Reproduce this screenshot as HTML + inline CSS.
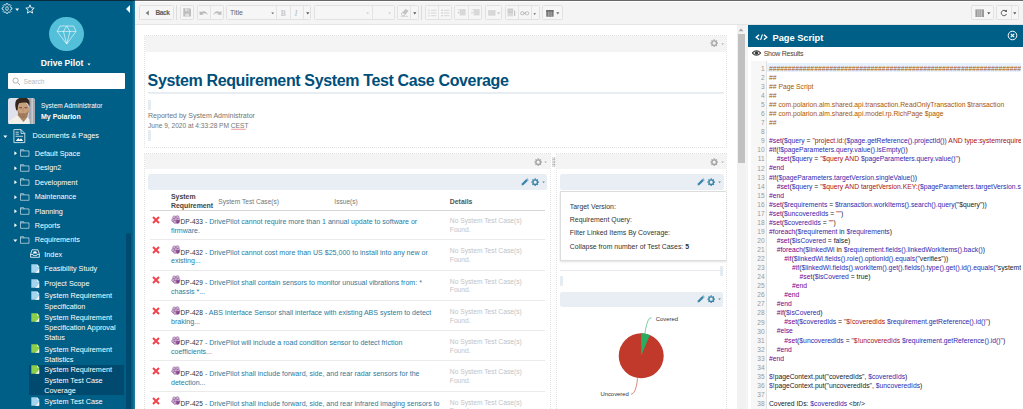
<!DOCTYPE html>
<html>
<head>
<meta charset="utf-8">
<title>System Requirement System Test Case Coverage</title>
<style>
*{box-sizing:border-box;margin:0;padding:0}
html,body{width:1023px;height:409px;overflow:hidden;background:#fff;font-family:"Liberation Sans",sans-serif;}
body{position:relative;color:#333;font-size:7px}
.abs{position:absolute}
.t{position:absolute;white-space:nowrap;line-height:1}
/* sidebar */
#side{position:absolute;left:0;top:0;width:135px;height:409px;background:#005f87;overflow:hidden}
#side .t{color:#fff}
.nav{font-size:7.25px;color:#fff;letter-spacing:0}
.sel{position:absolute;left:29px;top:365px;width:95px;height:30px;background:#004a70}
/* toolbar */
#tb{position:absolute;left:135px;top:0;width:888px;height:25px;background:#f4f4f4;border-bottom:1px solid #e4e4e4}
#topline{position:absolute;left:0;top:0;width:1023px;height:1px;background:rgba(10,10,10,0.6);z-index:50}
.btn{position:absolute;top:5px;height:14.5px;border:1px solid #e1e1e1;border-radius:1.5px;background:#f6f6f6}
.dv{position:absolute;top:0;width:1px;height:12.5px;background:#e4e4e4}
</style>
</head>
<body>
<div id="topline"></div>

<!-- ================= SIDEBAR ================= -->
<div id="side">

    <!-- top icons -->
  <svg class="abs" style="left:1px;top:3px" width="12" height="11" viewBox="0 0 12 11">
    <g fill="none" stroke="#fff" stroke-width="0.75" stroke-linejoin="round">
      <path d="M5.09 1.71 L5.30 0.55 L6.70 0.55 L6.91 1.71 L8.04 2.17 L9.00 1.50 L10.00 2.50 L9.33 3.46 L9.79 4.59 L10.95 4.80 L10.95 6.20 L9.79 6.41 L9.33 7.54 L10.00 8.50 L9.00 9.50 L8.04 8.83 L6.91 9.29 L6.70 10.45 L5.30 10.45 L5.09 9.29 L3.96 8.83 L3.00 9.50 L2.00 8.50 L2.67 7.54 L2.21 6.41 L1.05 6.20 L1.05 4.80 L2.21 4.59 L2.67 3.46 L2.00 2.50 L3.00 1.50 L3.96 2.17 Z"/>
      <ellipse cx="6" cy="5.5" rx="1.3" ry="1.9"/>
    </g>
  </svg>
  <svg class="abs" style="left:14.5px;top:7.8px" width="5" height="4" viewBox="0 0 5 4"><path d="M0.3 0.4 L4.1 0.4 L2.2 3 Z" fill="#fff"/></svg>
  <svg class="abs" style="left:24.5px;top:3.5px" width="11" height="11" viewBox="0 0 11 11">
    <path d="M5 0.9 L6.2 3.8 L9.2 4.1 L6.9 6.1 L7.6 9.1 L5 7.5 L2.4 9.1 L3.1 6.1 L0.8 4.1 L3.8 3.8 Z" fill="none" stroke="#fff" stroke-width="0.85" stroke-linejoin="round"/>
  </svg>
  <div class="abs" style="left:126px;top:5px;width:0;height:0;border-top:4px solid transparent;border-bottom:4px solid transparent;border-right:4.5px solid #fff"></div>

  <!-- project logo -->
  <div class="abs" style="left:49px;top:16.5px;width:34.5px;height:34.5px;border-radius:50%;background:#53bfd9"></div>
  <svg class="abs" style="left:56px;top:24px" width="21" height="21" viewBox="0 0 21 21">
    <g fill="none" stroke="#fff" stroke-width="0.6" stroke-linejoin="round">
      <path d="M4 2 L17.6 2 L20 7.4 L10.7 20 L1.2 7.4 Z"/>
      <path d="M1.2 7.4 L20 7.4"/>
      <path d="M7.4 7.4 L10.7 2 L14 7.4"/>
      <path d="M7.4 7.4 L10.7 20 L14 7.4"/>
    </g>
  </svg>

  <div class="t" style="left:0;width:124px;text-align:center;top:58.8px;font-size:8.6px;font-weight:bold;">Drive Pilot</div>
  <svg class="abs" style="left:87px;top:62.8px" width="5" height="4" viewBox="0 0 5 4"><path d="M0.5 0.4 L3.5 0.4 L2 2.4 Z" fill="#fff"/></svg>

  <!-- search -->
  <div class="abs" style="left:7.5px;top:73px;width:117.5px;height:16px;background:#fff;border-radius:1px"></div>
  <svg class="abs" style="left:11.5px;top:76.5px" width="9" height="9" viewBox="0 0 9 9"><circle cx="3.6" cy="3.6" r="2.6" fill="none" stroke="#a9a9a9" stroke-width="0.9"/><path d="M5.5 5.5 L8 8" stroke="#a9a9a9" stroke-width="1"/></svg>
  <div class="t" style="left:23.5px;top:78.5px;font-size:6.6px;color:#b8b8b8">Search</div>

  <!-- avatar -->
  <svg class="abs" style="left:8px;top:97.5px" width="27" height="26.5" viewBox="0 0 27 26.5">
    <defs><clipPath id="avc"><rect x="0" y="0" width="27" height="26.5" rx="2.6"/></clipPath>
    <filter id="avb" x="-10%" y="-10%" width="120%" height="120%"><feGaussianBlur stdDeviation="0.55"/></filter></defs>
    <g clip-path="url(#avc)">
      <rect width="27" height="26.5" fill="#dfe2ec"/>
      <g filter="url(#avb)">
        <rect x="20.6" y="-1" width="7.5" height="29" fill="#a4a8b0"/>
        <rect x="23.4" y="-1" width="1.6" height="29" fill="#c6c9ce"/>
        <path d="M0 27 L1.6 22.5 L6 19.5 L9.5 17 L12 20 L15.5 24 L19.5 19 L21.5 21.5 L22 27 Z" fill="#f3efe9"/>
        <path d="M9.5 17 L11 14 L20 14 L19.5 19 L15.5 24 L12 20 Z" fill="#a98466"/>
        <ellipse cx="15.2" cy="11.6" rx="5.7" ry="7.6" fill="#c9a07c"/>
        <path d="M9.4 11 Q9.6 18.6 15 20 Q20.4 18.6 21 11 Q19.6 15 17.6 15.6 Q15.2 14.6 12.8 15.6 Q10.6 15 9.4 11 Z" fill="#83614a" opacity="0.6"/>
        <path d="M8.2 12.5 Q6.4 6 8 2.6 Q10.4 -0.6 15 -0.4 Q20 -0.6 21.4 3 Q22 6 21.2 8.5 Q20.6 5.4 18.6 4.8 Q14 4.2 11 5.6 Q9.6 8 9.6 12 Z" fill="#34251c"/>
        <rect x="11.3" y="9.3" width="2.7" height="0.9" fill="#4a3327" opacity="0.9"/>
        <rect x="16.6" y="9.3" width="2.7" height="0.9" fill="#4a3327" opacity="0.9"/>
        <rect x="14.7" y="10" width="1" height="3.6" fill="#b58b69" opacity="0.8"/>
      </g>
    </g>
  </svg>
  <div class="t" style="left:41px;top:103.2px;font-size:6.5px">System Administrator</div>
  <div class="t" style="left:41px;top:113px;font-size:7px;font-weight:bold">My Polarion</div>

  <svg class="abs" style="left:3.4px;top:135.1px" width="5" height="4" viewBox="0 0 5 4"><path d="M0.3 0.4 L4.3 0.4 L2.3 3 Z" fill="#fff"/></svg>
  <svg class="abs" style="left:13px;top:129px" width="13" height="14.5" viewBox="0 0 13 14.5"><g fill="none" stroke="#fff" stroke-width="0.75" stroke-linejoin="round"><path d="M0.9 0.6 L8 0.6 L11.8 4.4 L11.8 13.6 L0.9 13.6 Z"/><path d="M8 0.6 L8 4.4 L11.8 4.4"/><path d="M2.6 3.2 L5.8 3.2 M2.6 5.2 L5.8 5.2 M2.6 7.3 L10 7.3"/></g><path d="M2.8 12 L5.2 9 L6.6 10.8 L8 9.2 L10.2 12 Z" fill="#fff"/></svg>
  <div class="t nav" style="left:32.5px;top:132.3px;font-size:7.3px">Documents &amp; Pages</div>
  <svg class="abs" style="left:13.6px;top:151.0px" width="4" height="5" viewBox="0 0 4 5"><path d="M0.4 0.3 L3 2.3 L0.4 4.3 Z" fill="#fff"/></svg>
  <svg class="abs" style="left:20.4px;top:149.2px" width="9.6" height="8" viewBox="0 0 9.6 8"><path d="M0.5 1.9 L0.5 0.7 L3.6 0.7 L4.2 1.9 L9 1.9 L9 7.3 L0.5 7.3 Z M0.5 1.9 L4.2 1.9" fill="none" stroke="#fff" stroke-opacity="0.88" stroke-width="0.65" stroke-linejoin="round"/></svg>
  <div class="t nav" style="left:34.7px;top:149.6px">Default Space</div>
  <svg class="abs" style="left:13.6px;top:165.7px" width="4" height="5" viewBox="0 0 4 5"><path d="M0.4 0.3 L3 2.3 L0.4 4.3 Z" fill="#fff"/></svg>
  <svg class="abs" style="left:20.4px;top:163.9px" width="9.6" height="8" viewBox="0 0 9.6 8"><path d="M0.5 1.9 L0.5 0.7 L3.6 0.7 L4.2 1.9 L9 1.9 L9 7.3 L0.5 7.3 Z M0.5 1.9 L4.2 1.9" fill="none" stroke="#fff" stroke-opacity="0.88" stroke-width="0.65" stroke-linejoin="round"/></svg>
  <div class="t nav" style="left:34.7px;top:164.3px">Design2</div>
  <svg class="abs" style="left:13.6px;top:180.0px" width="4" height="5" viewBox="0 0 4 5"><path d="M0.4 0.3 L3 2.3 L0.4 4.3 Z" fill="#fff"/></svg>
  <svg class="abs" style="left:20.4px;top:178.2px" width="9.6" height="8" viewBox="0 0 9.6 8"><path d="M0.5 1.9 L0.5 0.7 L3.6 0.7 L4.2 1.9 L9 1.9 L9 7.3 L0.5 7.3 Z M0.5 1.9 L4.2 1.9" fill="none" stroke="#fff" stroke-opacity="0.88" stroke-width="0.65" stroke-linejoin="round"/></svg>
  <div class="t nav" style="left:34.7px;top:178.6px">Development</div>
  <svg class="abs" style="left:13.6px;top:194.5px" width="4" height="5" viewBox="0 0 4 5"><path d="M0.4 0.3 L3 2.3 L0.4 4.3 Z" fill="#fff"/></svg>
  <svg class="abs" style="left:20.4px;top:192.7px" width="9.6" height="8" viewBox="0 0 9.6 8"><path d="M0.5 1.9 L0.5 0.7 L3.6 0.7 L4.2 1.9 L9 1.9 L9 7.3 L0.5 7.3 Z M0.5 1.9 L4.2 1.9" fill="none" stroke="#fff" stroke-opacity="0.88" stroke-width="0.65" stroke-linejoin="round"/></svg>
  <div class="t nav" style="left:34.7px;top:193.1px">Maintenance</div>
  <svg class="abs" style="left:13.6px;top:208.9px" width="4" height="5" viewBox="0 0 4 5"><path d="M0.4 0.3 L3 2.3 L0.4 4.3 Z" fill="#fff"/></svg>
  <svg class="abs" style="left:20.4px;top:207.1px" width="9.6" height="8" viewBox="0 0 9.6 8"><path d="M0.5 1.9 L0.5 0.7 L3.6 0.7 L4.2 1.9 L9 1.9 L9 7.3 L0.5 7.3 Z M0.5 1.9 L4.2 1.9" fill="none" stroke="#fff" stroke-opacity="0.88" stroke-width="0.65" stroke-linejoin="round"/></svg>
  <div class="t nav" style="left:34.7px;top:207.5px">Planning</div>
  <svg class="abs" style="left:13.6px;top:223.2px" width="4" height="5" viewBox="0 0 4 5"><path d="M0.4 0.3 L3 2.3 L0.4 4.3 Z" fill="#fff"/></svg>
  <svg class="abs" style="left:20.4px;top:221.4px" width="9.6" height="8" viewBox="0 0 9.6 8"><path d="M0.5 1.9 L0.5 0.7 L3.6 0.7 L4.2 1.9 L9 1.9 L9 7.3 L0.5 7.3 Z M0.5 1.9 L4.2 1.9" fill="none" stroke="#fff" stroke-opacity="0.88" stroke-width="0.65" stroke-linejoin="round"/></svg>
  <div class="t nav" style="left:34.7px;top:221.8px">Reports</div>
  <svg class="abs" style="left:13.0px;top:238.5px" width="5" height="4" viewBox="0 0 5 4"><path d="M0.3 0.4 L4.3 0.4 L2.3 3 Z" fill="#fff"/></svg>
  <svg class="abs" style="left:20.4px;top:235.9px" width="9.6" height="8" viewBox="0 0 9.6 8"><path d="M0.5 1.9 L0.5 0.7 L3.6 0.7 L4.2 1.9 L9 1.9 L9 7.3 L0.5 7.3 Z M0.5 1.9 L4.2 1.9" fill="none" stroke="#fff" stroke-opacity="0.88" stroke-width="0.65" stroke-linejoin="round"/></svg>
  <div class="t nav" style="left:34.7px;top:236.3px">Requirements</div>
  <div class="sel"></div>
  <svg class="abs" style="left:30px;top:248.8px" width="10" height="9" viewBox="0 0 10 9"><g fill="none" stroke="#fff" stroke-width="0.8" stroke-linejoin="round"><path d="M0.6 5.2 L2 0.8 L8 0.8 L9.4 5.2 L9.4 8.3 L0.6 8.3 Z"/><path d="M0.6 5.4 L3 5.4 L3.4 6.6 L6.6 6.6 L7 5.4 L9.4 5.4"/></g><path d="M3 4.6 Q3 2.3 5 2.3 Q7 2.3 7 4.6 Z" fill="#fff"/></svg>
  <div class="t nav" style="left:44.3px;top:250.5px">Index</div>
  <svg class="abs" style="left:31px;top:263.7px" width="8.5" height="9" viewBox="0 0 8.5 9"><path d="M0.3 0.3 L6 0.3 L8.2 2.5 L8.2 8.7 L0.3 8.7 Z" fill="#a5d5ee"/><path d="M8.2 4.2 L8.2 8.7 L4 8.7 Q7 7.5 8.2 4.2 Z" fill="#fff" opacity="0.95"/><path d="M6 0.3 L6 2.5 L8.2 2.5 Z" fill="#fff" opacity="0.75"/></svg>
  <div class="t nav" style="left:44.3px;top:264.8px">Feasibility Study</div>
  <svg class="abs" style="left:31px;top:278.5px" width="8.5" height="9" viewBox="0 0 8.5 9"><path d="M0.3 0.3 L6 0.3 L8.2 2.5 L8.2 8.7 L0.3 8.7 Z" fill="#a5d5ee"/><path d="M8.2 4.2 L8.2 8.7 L4 8.7 Q7 7.5 8.2 4.2 Z" fill="#fff" opacity="0.95"/><path d="M6 0.3 L6 2.5 L8.2 2.5 Z" fill="#fff" opacity="0.75"/></svg>
  <div class="t nav" style="left:44.3px;top:279.6px">Project Scope</div>
  <svg class="abs" style="left:31px;top:291.2px" width="8.5" height="9" viewBox="0 0 8.5 9"><path d="M0.3 0.3 L6 0.3 L8.2 2.5 L8.2 8.7 L0.3 8.7 Z" fill="#a5d5ee"/><path d="M8.2 4.2 L8.2 8.7 L4 8.7 Q7 7.5 8.2 4.2 Z" fill="#fff" opacity="0.95"/><path d="M6 0.3 L6 2.5 L8.2 2.5 Z" fill="#fff" opacity="0.75"/></svg>
  <div class="t nav" style="left:44.3px;top:292.3px">System Requirement</div>
  <div class="t nav" style="left:44.3px;top:302.6px">Specification</div>
  <svg class="abs" style="left:31px;top:312.7px" width="8.5" height="9" viewBox="0 0 8.5 9"><path d="M0.3 0.3 L6 0.3 L8.2 2.5 L8.2 8.7 L0.3 8.7 Z" fill="#8ccf4d"/><path d="M8.2 4.2 L8.2 8.7 L4 8.7 Q7 7.5 8.2 4.2 Z" fill="#fff" opacity="0.95"/><path d="M6 0.3 L6 2.5 L8.2 2.5 Z" fill="#fff" opacity="0.75"/></svg>
  <div class="t nav" style="left:44.3px;top:313.8px">System Requirement</div>
  <div class="t nav" style="left:44.3px;top:324.0px">Specification Approval</div>
  <div class="t nav" style="left:44.3px;top:334.0px">Status</div>
  <svg class="abs" style="left:31px;top:344.4px" width="8.5" height="9" viewBox="0 0 8.5 9"><path d="M0.3 0.3 L6 0.3 L8.2 2.5 L8.2 8.7 L0.3 8.7 Z" fill="#8ccf4d"/><path d="M8.2 4.2 L8.2 8.7 L4 8.7 Q7 7.5 8.2 4.2 Z" fill="#fff" opacity="0.95"/><path d="M6 0.3 L6 2.5 L8.2 2.5 Z" fill="#fff" opacity="0.75"/></svg>
  <div class="t nav" style="left:44.3px;top:345.5px">System Requirement</div>
  <div class="t nav" style="left:44.3px;top:355.6px">Statistics</div>
  <svg class="abs" style="left:31px;top:365.2px" width="8.5" height="9" viewBox="0 0 8.5 9"><path d="M0.3 0.3 L6 0.3 L8.2 2.5 L8.2 8.7 L0.3 8.7 Z" fill="#8ccf4d"/><path d="M8.2 4.2 L8.2 8.7 L4 8.7 Q7 7.5 8.2 4.2 Z" fill="#fff" opacity="0.95"/><path d="M6 0.3 L6 2.5 L8.2 2.5 Z" fill="#fff" opacity="0.75"/></svg>
  <div class="t nav" style="left:44.3px;top:366.3px">System Requirement</div>
  <div class="t nav" style="left:44.3px;top:376.6px">System Test Case</div>
  <div class="t nav" style="left:44.3px;top:386.9px">Coverage</div>
  <svg class="abs" style="left:31px;top:397.0px" width="8.5" height="9" viewBox="0 0 8.5 9"><path d="M0.3 0.3 L6 0.3 L8.2 2.5 L8.2 8.7 L0.3 8.7 Z" fill="#a5d5ee"/><path d="M8.2 4.2 L8.2 8.7 L4 8.7 Q7 7.5 8.2 4.2 Z" fill="#fff" opacity="0.95"/><path d="M6 0.3 L6 2.5 L8.2 2.5 Z" fill="#fff" opacity="0.75"/></svg>
  <div class="t nav" style="left:44.3px;top:398.1px">System Test Case</div>
  <div class="abs" style="left:126.4px;top:233px;width:4.4px;height:200px;background:#004a70;border-radius:2.2px"></div>
  <div class="abs" style="left:132.4px;top:0;width:2.6px;height:409px;background:linear-gradient(90deg,rgba(255,255,255,0),rgba(120,200,230,0.3))"></div>

</div>

<!-- ================= TOOLBAR ================= -->
<div id="tb"><div class="abs" style="left:0;top:1px;width:888px;height:1px;background:#fdfdfd"></div>
  <!--TB-START-->
  <!-- coordinates relative to #tb (left:135) -->
  <div class="btn" style="left:4px;width:35px"></div>
  <svg class="abs" style="left:9.5px;top:9.6px" width="5" height="7" viewBox="0 0 5 7"><path d="M3.8 0.6 L3.8 5.6 L0.7 3.1 Z" fill="#7a7a7a"/></svg>
  <div class="t" style="left:20.5px;top:10px;font-size:6.6px;font-weight:bold;color:#5a5a5a;letter-spacing:-0.45px">Back</div>
  <div class="abs" style="left:41px;top:5px;width:1px;height:14.5px;background:#dcdcdc"></div>
  <!-- save -->
  <div class="btn" style="left:45.3px;width:13.5px"></div>
  <svg class="abs" style="left:48px;top:8px" width="8.4" height="8.8" viewBox="0 0 8.4 8.8"><path d="M0.3 0.3 L7 0.3 L8.1 1.4 L8.1 8.5 L0.3 8.5 Z" fill="#bcbcbc"/><rect x="2" y="0.3" width="4.2" height="2.9" fill="#dedede"/><rect x="4.6" y="0.7" width="1" height="1.9" fill="#bcbcbc"/><rect x="2.3" y="5.6" width="3.8" height="2.9" fill="#e0e0e0"/></svg>
  <!-- undo/redo -->
  <div class="btn" style="left:61.6px;width:27px"><div class="dv" style="left:12.4px"></div></div>
  <svg class="abs" style="left:63.6px;top:10px" width="10" height="6" viewBox="0 0 10 6"><path d="M0.6 0.9 L0.6 5.1 L4.8 4.6 L3.5 3.5 Q6 2.6 9 4.7 Q6.4 -0.6 2 2.1 Z" fill="#b9b9b9"/></svg>
  <svg class="abs" style="left:77.4px;top:10px" width="10" height="6" viewBox="0 0 10 6"><path d="M9.4 0.9 L9.4 5.1 L5.2 4.6 L6.5 3.5 Q4 2.6 1 4.7 Q3.6 -0.6 8 2.1 Z" fill="#bdbdbd"/></svg>
  <!-- style select + B I -->
  <div class="btn" style="left:91px;width:85px"><div class="dv" style="left:49.4px"></div><div class="dv" style="left:63px"></div><div class="dv" style="left:76px"></div></div>
  <div class="t" style="left:95px;top:9px;font-size:7px;color:#686868">Title</div>
  <svg class="abs" style="left:135.5px;top:12.3px" width="4" height="3" viewBox="0 0 4 3"><path d="M0.3 0.4 L3.1 0.4 L1.7 2.2 Z" fill="#666"/></svg>
  <div class="t" style="left:145.8px;top:9.8px;font-size:7.6px;font-weight:bold;color:#c6c6c6;font-family:'Liberation Serif',serif">B</div>
  <div class="t" style="left:159.4px;top:9.2px;font-size:9px;font-style:italic;color:#bdbdbd;font-family:'Liberation Serif',serif">I</div>
  <svg class="abs" style="left:170.5px;top:12px" width="4" height="3" viewBox="0 0 4 3"><path d="M0.2 0.3 L3.4 0.3 L1.8 2.5 Z" fill="#555"/></svg>
  <!-- font family / size -->
  <div class="btn" style="left:179.3px;width:80.3px"><div class="dv" style="left:57px"></div></div>
  <svg class="abs" style="left:230.5px;top:12.3px" width="4" height="3" viewBox="0 0 4 3"><path d="M0.3 0.4 L3.1 0.4 L1.7 2.2 Z" fill="#ccc"/></svg>
  <svg class="abs" style="left:253.3px;top:12.3px" width="4" height="3" viewBox="0 0 4 3"><path d="M0.3 0.4 L3.1 0.4 L1.7 2.2 Z" fill="#ccc"/></svg>
  <!-- eraser -->
  <div class="btn" style="left:262.4px;width:21.2px"><div class="dv" style="left:11.4px"></div></div>
  <svg class="abs" style="left:264.5px;top:8px" width="10" height="9" viewBox="0 0 10 9"><path d="M5.6 0.8 L8.6 3 L5.4 6.6 L2.4 4.4 Z" fill="#c4c4c4"/><path d="M2.4 4.4 L5.4 6.6 L4.3 7.6 L2.2 7.6 L1.2 6 Z" fill="none" stroke="#bbb" stroke-width="0.7"/><path d="M0.8 8.4 L8 8.4" stroke="#c8c8c8" stroke-width="0.7"/></svg>
  <svg class="abs" style="left:277.5px;top:12px" width="4" height="3" viewBox="0 0 4 3"><path d="M0.2 0.3 L3.4 0.3 L1.8 2.5 Z" fill="#555"/></svg>
  <div class="abs" style="left:286.3px;top:5px;width:1px;height:14.5px;background:#dcdcdc"></div>
  <!-- lists -->
  <div class="btn" style="left:290px;width:26.8px"><div class="dv" style="left:11.8px"></div></div>
  <svg class="abs" style="left:292.5px;top:8.5px" width="9" height="8" viewBox="0 0 9 8"><g stroke="#cfcfcf" stroke-width="0.8"><path d="M3 1.3 L8.4 1.3 M3 4 L8.4 4 M3 6.7 L8.4 6.7"/><path d="M1 0.4 L1 2.2 M1 3.1 L1 4.9 M1 5.8 L1 7.6" stroke-width="0.9"/></g></svg>
  <svg class="abs" style="left:305.8px;top:8.5px" width="9" height="8" viewBox="0 0 9 8"><g stroke="#cfcfcf" stroke-width="0.8"><path d="M3 1.3 L8.4 1.3 M3 4 L8.4 4 M3 6.7 L8.4 6.7"/></g><g fill="#c8c8c8"><rect x="0.4" y="0.6" width="1.4" height="1.4"/><rect x="0.4" y="3.3" width="1.4" height="1.4"/><rect x="0.4" y="6" width="1.4" height="1.4"/></g></svg>
  <!-- indent -->
  <div class="btn" style="left:319.4px;width:27.4px"><div class="dv" style="left:12.8px"></div></div>
  <svg class="abs" style="left:322px;top:9.4px" width="9" height="7" viewBox="0 0 9 7"><rect x="2.6" y="0.4" width="6" height="6" fill="#d8d8d8"/><path d="M0.6 0.6 L8.6 0.6" stroke="#d2d2d2" stroke-width="0.6"/><path d="M2 2.6 L0.6 3.7 L2 4.8 Z" fill="#c4c4c4"/></svg>
  <svg class="abs" style="left:335.6px;top:9.4px" width="9" height="7" viewBox="0 0 9 7"><rect x="2.6" y="0.4" width="6" height="6" fill="#d8d8d8"/><path d="M0.6 0.6 L8.6 0.6" stroke="#d2d2d2" stroke-width="0.6"/><path d="M0.6 2.6 L2 3.7 L0.6 4.8 Z" fill="#c4c4c4"/></svg>
  <!-- table -->
  <div class="btn" style="left:349.6px;width:17.3px"></div>
  <svg class="abs" style="left:352.7px;top:9.8px" width="8" height="6" viewBox="0 0 8 6"><rect x="0.2" y="0.2" width="7.2" height="5.4" fill="#d2d2d2"/><path d="M0.2 2 L7.4 2 M0.2 3.8 L7.4 3.8 M2.6 0.2 L2.6 5.6 M5 0.2 L5 5.6" stroke="#e4e4e4" stroke-width="0.4"/></svg>
  <svg class="abs" style="left:361.5px;top:12px" width="4" height="3" viewBox="0 0 4 3"><path d="M0.3 0.4 L3.1 0.4 L1.7 2.2 Z" fill="#bbb"/></svg>
  <!-- image/link -->
  <div class="btn" style="left:369.8px;width:34.8px"><div class="dv" style="left:12px"></div><div class="dv" style="left:25px"></div></div>
  <svg class="abs" style="left:372.3px;top:7.6px" width="10" height="9" viewBox="0 0 10 9"><rect x="0.5" y="0.6" width="5.6" height="5" fill="#c9c9c9"/><path d="M1.2 2 L2.6 3.4 L3.8 2.2 L5.4 4" fill="none" stroke="#efefef" stroke-width="0.6"/><path d="M0.5 6.6 L6 6.6 M0.5 7.8 L6 7.8" stroke="#c4c4c4" stroke-width="0.7"/><path d="M7.6 2.4 L7.6 8" stroke="#bdbdbd" stroke-width="1.1"/></svg>
  <svg class="abs" style="left:384.8px;top:11px" width="10" height="5" viewBox="0 0 10 5"><rect x="0.6" y="0.8" width="3.6" height="3" rx="1.4" fill="none" stroke="#b5b5b5" stroke-width="0.9"/><rect x="5.2" y="0.8" width="3.6" height="3" rx="1.4" fill="none" stroke="#b5b5b5" stroke-width="0.9"/><path d="M3.4 2.3 L6 2.3" stroke="#b5b5b5" stroke-width="0.8"/></svg>
  <svg class="abs" style="left:398.4px;top:12.6px" width="4" height="3" viewBox="0 0 4 3"><path d="M0.4 0.3 L3 0.3 L1.7 2 Z" fill="#666"/></svg>
  <!-- columns -->
  <div class="btn" style="left:407.4px;width:20.2px"></div>
  <svg class="abs" style="left:410.8px;top:10px" width="8" height="7" viewBox="0 0 8 7"><rect x="0.2" y="0.2" width="7.4" height="6.5" fill="#7a7a7a"/><path d="M0.2 0.9 L7.6 0.9" stroke="#5e5e5e" stroke-width="1.2"/><path d="M2.6 1.6 L2.6 6.7 M5.2 1.6 L5.2 6.7" stroke="#b8b8b8" stroke-width="0.7"/><rect x="3" y="1.6" width="1.9" height="5.1" fill="#8e8e8e"/></svg>
  <svg class="abs" style="left:420.8px;top:11.8px" width="4" height="3" viewBox="0 0 4 3"><path d="M0.2 0.3 L3.4 0.3 L1.8 2.4 Z" fill="#6e6e6e"/></svg>
  <!-- right buttons -->
  <div class="btn" style="left:836.3px;width:22.3px"></div>
  <svg class="abs" style="left:839.6px;top:8.7px" width="10" height="9" viewBox="0 0 10 9"><rect x="0.4" y="0.4" width="8.6" height="7.6" fill="#9a9a9a"/><path d="M2.8 0.6 L2.8 8 M6.4 0.6 L6.4 8" stroke="#cfcfcf" stroke-width="0.8"/><rect x="3.6" y="0.8" width="2" height="6.8" fill="#b4b4b4"/></svg>
  <svg class="abs" style="left:852.3px;top:11.8px" width="4" height="3" viewBox="0 0 4 3"><path d="M0.2 0.3 L3.4 0.3 L1.8 2.5 Z" fill="#555"/></svg>
  <div class="btn" style="left:861.2px;width:22.8px"><div class="dv" style="left:13.6px"></div></div>
  <svg class="abs" style="left:865.3px;top:9.3px" width="8" height="8" viewBox="0 0 8 8"><path d="M6 2.2 A2.7 2.7 0 1 0 6.5 5" fill="none" stroke="#555" stroke-width="1"/><path d="M4.4 2.8 L7 3 L6.8 0.4 Z" fill="#555"/></svg>
  <svg class="abs" style="left:877.7px;top:11.8px" width="4" height="3" viewBox="0 0 4 3"><path d="M0.2 0.3 L3.4 0.3 L1.8 2.5 Z" fill="#555"/></svg>
  <!--TB-END-->
</div>

<!-- ================= MAIN ================= -->
<div id="main" class="abs" style="left:135px;top:25px;width:613px;height:384px;background:#fff;overflow:hidden">
  <div class="abs" style="left:9.0px;top:10.0px;width:583.0px;height:113.0px;border:1px dotted #e3e3e3"></div>
  <div class="abs" style="left:10.0px;top:11.0px;width:581.0px;height:15.6px;background:#f4f4f4"></div>
  <svg class="abs" style="left:574.8px;top:14.2px" width="8.4" height="8.4" viewBox="0 0 9 9"><circle cx="4.5" cy="4.5" r="2.45" fill="none" stroke="#aaaaaa" stroke-width="1.5"/><g stroke="#aaaaaa" stroke-width="1.3"><path d="M4.5 0.4 L4.5 1.8 M4.5 7.2 L4.5 8.6 M0.4 4.5 L1.8 4.5 M7.2 4.5 L8.6 4.5 M1.6 1.6 L2.6 2.6 M6.4 6.4 L7.4 7.4 M1.6 7.4 L2.6 6.4 M6.4 2.6 L7.4 1.6"/></g></svg>
  <svg class="abs" style="left:585.6px;top:18.0px" width="4" height="3" viewBox="0 0 4 3"><path d="M0.3 0.4 L2.9 0.4 L1.6 2.1 Z" fill="#aaa"/></svg>
  <div class="t" style="left:12.6px;top:47.8px;font-size:16px;font-weight:bold;color:#004f7a;letter-spacing:-0.36px">System Requirement System Test Case Coverage</div>
  <div class="abs" style="left:13.0px;top:67.0px;width:576.0px;height:1.6px;background:#e8edf2"></div>
  <div class="abs" style="left:13.0px;top:74.6px;width:3px;height:10px;background:#e4ebf1;border-radius:1px"></div>
  <div class="t" style="left:13.0px;top:87.2px;font-size:7.05px;color:#757575">Reported by System Administrator</div>
  <div class="t" style="left:13.0px;top:97.7px;font-size:6.6px;color:#757575">June 9, 2020 at 4:33:28 PM <span style="position:relative">CEST<svg style="position:absolute;left:0;top:6.4px" width="16" height="3" viewBox="0 0 16 3"><path d="M0 1.8 L1 0.8 L2 1.8 L3 0.8 L4 1.8 L5 0.8 L6 1.8 L7 0.8 L8 1.8 L9 0.8 L10 1.8 L11 0.8 L12 1.8 L13 0.8 L14 1.8 L15 0.8" fill="none" stroke="#e0433c" stroke-width="0.55"/></svg></span></div>
  <div class="abs" style="left:13.0px;top:105.0px;width:3px;height:11px;background:#e4ebf1;border-radius:1px"></div>
  <div class="abs" style="left:9.0px;top:128.0px;width:407.0px;height:300px;border:1px dotted #e3e3e3"></div>
  <div class="abs" style="left:10.0px;top:129.0px;width:405.0px;height:15.3px;background:#f4f4f4"></div>
  <svg class="abs" style="left:398.5px;top:132.8px" width="8.4" height="8.4" viewBox="0 0 9 9"><circle cx="4.5" cy="4.5" r="2.45" fill="none" stroke="#a4a4a4" stroke-width="1.5"/><g stroke="#a4a4a4" stroke-width="1.3"><path d="M4.5 0.4 L4.5 1.8 M4.5 7.2 L4.5 8.6 M0.4 4.5 L1.8 4.5 M7.2 4.5 L8.6 4.5 M1.6 1.6 L2.6 2.6 M6.4 6.4 L7.4 7.4 M1.6 7.4 L2.6 6.4 M6.4 2.6 L7.4 1.6"/></g></svg>
  <svg class="abs" style="left:409.4px;top:136.3px" width="4" height="3" viewBox="0 0 4 3"><path d="M0.3 0.4 L2.9 0.4 L1.6 2.1 Z" fill="#aaa"/></svg>
  <div class="abs" style="left:13.0px;top:149.0px;width:399.0px;height:16.2px;background:#e8eef3;border-radius:2.5px"></div>
  <svg class="abs" style="left:386.0px;top:153.2px" width="8" height="8" viewBox="0 0 8 8"><path d="M0.5 7.5 L0.9 5.5 L5.3 1.1 L6.9 2.7 L2.5 7.1 Z" fill="#3a85a9"/><path d="M5.9 0.5 L7.5 2.1" stroke="#3a85a9" stroke-width="0.9"/></svg>
  <svg class="abs" style="left:396.2px;top:152.8px" width="8.4" height="8.4" viewBox="0 0 9 9"><circle cx="4.5" cy="4.5" r="2.45" fill="none" stroke="#3a85a9" stroke-width="1.5"/><g stroke="#3a85a9" stroke-width="1.3"><path d="M4.5 0.4 L4.5 1.8 M4.5 7.2 L4.5 8.6 M0.4 4.5 L1.8 4.5 M7.2 4.5 L8.6 4.5 M1.6 1.6 L2.6 2.6 M6.4 6.4 L7.4 7.4 M1.6 7.4 L2.6 6.4 M6.4 2.6 L7.4 1.6"/></g></svg>
  <svg class="abs" style="left:407.2px;top:155.9px" width="4" height="3" viewBox="0 0 4 3"><path d="M0.3 0.4 L2.9 0.4 L1.6 2.1 Z" fill="#3a85a9"/></svg>
  <div class="t" style="left:36.0px;top:168.8px;font-size:6.9px;font-weight:bold;color:#444">System</div>
  <div class="t" style="left:36.0px;top:177.8px;font-size:6.9px;font-weight:bold;color:#444">Requirement</div>
  <div class="t" style="left:83.3px;top:173.7px;font-size:6.6px;color:#757575">System Test Case(s)</div>
  <div class="t" style="left:199.3px;top:173.7px;font-size:6.6px;color:#757575">Issue(s)</div>
  <div class="t" style="left:314.8px;top:174.2px;font-size:6.9px;font-weight:bold;color:#555">Details</div>
  <div class="abs" style="left:15.0px;top:185.4px;width:395.0px;height:1px;background:#d6d6d6"></div>
  <svg class="abs" style="left:17.4px;top:190.7px" width="8" height="8" viewBox="0 0 8 8"><path d="M1 1 L7 7 M7 1 L1 7" stroke="#f0434e" stroke-width="2"/></svg>
  <svg class="abs" style="left:35.8px;top:189.8px" width="10" height="9" viewBox="0 0 10 9"><g fill="#d3b3d8" stroke="#86588f" stroke-width="0.55"><circle cx="3.4" cy="2.6" r="1.7"/><circle cx="6.4" cy="2.4" r="1.7"/><circle cx="2.4" cy="5.2" r="1.7"/><circle cx="5" cy="4.6" r="1.8"/><circle cx="7.4" cy="5" r="1.6"/><circle cx="4" cy="6.8" r="1.6"/><circle cx="6.4" cy="6.9" r="1.5"/></g><path d="M5.2 5.6 L8.6 5 L8.4 8 L5.6 8.6 Z" fill="#7b2f82" opacity="0.8"/></svg>
  <div class="t" style="left:45.6px;top:193.3px;font-size:7.05px;color:#2b7ba0"><span style="color:#333;font-size:6.5px;letter-spacing:0.05px">DP-433</span> - DrivePilot cannot require more than 1 annual update to software or</div>
  <div class="t" style="left:36.0px;top:202.2px;font-size:7.05px;color:#2b7ba0">firmware.</div>
  <div class="t" style="left:314.8px;top:193.0px;font-size:6.7px;color:#c3c3c3">No System Test Case(s)</div>
  <div class="t" style="left:314.8px;top:201.9px;font-size:6.7px;color:#c3c3c3">Found.</div>
  <div class="abs" style="left:15.0px;top:214.3px;width:395.0px;height:1px;background:#eaeaea"></div>
  <svg class="abs" style="left:17.4px;top:220.9px" width="8" height="8" viewBox="0 0 8 8"><path d="M1 1 L7 7 M7 1 L1 7" stroke="#f0434e" stroke-width="2"/></svg>
  <svg class="abs" style="left:35.8px;top:220.0px" width="10" height="9" viewBox="0 0 10 9"><g fill="#d3b3d8" stroke="#86588f" stroke-width="0.55"><circle cx="3.4" cy="2.6" r="1.7"/><circle cx="6.4" cy="2.4" r="1.7"/><circle cx="2.4" cy="5.2" r="1.7"/><circle cx="5" cy="4.6" r="1.8"/><circle cx="7.4" cy="5" r="1.6"/><circle cx="4" cy="6.8" r="1.6"/><circle cx="6.4" cy="6.9" r="1.5"/></g><path d="M5.2 5.6 L8.6 5 L8.4 8 L5.6 8.6 Z" fill="#7b2f82" opacity="0.8"/></svg>
  <div class="t" style="left:45.6px;top:223.5px;font-size:7.05px;color:#2b7ba0"><span style="color:#333;font-size:6.5px;letter-spacing:0.05px">DP-432</span> - DrivePilot cannot cost more than US $25,000 to install into any new or</div>
  <div class="t" style="left:36.0px;top:232.4px;font-size:7.05px;color:#2b7ba0">existing...</div>
  <div class="t" style="left:314.8px;top:223.2px;font-size:6.7px;color:#c3c3c3">No System Test Case(s)</div>
  <div class="t" style="left:314.8px;top:232.1px;font-size:6.7px;color:#c3c3c3">Found.</div>
  <div class="abs" style="left:15.0px;top:244.6px;width:395.0px;height:1px;background:#eaeaea"></div>
  <svg class="abs" style="left:17.4px;top:251.2px" width="8" height="8" viewBox="0 0 8 8"><path d="M1 1 L7 7 M7 1 L1 7" stroke="#f0434e" stroke-width="2"/></svg>
  <svg class="abs" style="left:35.8px;top:250.3px" width="10" height="9" viewBox="0 0 10 9"><g fill="#d3b3d8" stroke="#86588f" stroke-width="0.55"><circle cx="3.4" cy="2.6" r="1.7"/><circle cx="6.4" cy="2.4" r="1.7"/><circle cx="2.4" cy="5.2" r="1.7"/><circle cx="5" cy="4.6" r="1.8"/><circle cx="7.4" cy="5" r="1.6"/><circle cx="4" cy="6.8" r="1.6"/><circle cx="6.4" cy="6.9" r="1.5"/></g><path d="M5.2 5.6 L8.6 5 L8.4 8 L5.6 8.6 Z" fill="#7b2f82" opacity="0.8"/></svg>
  <div class="t" style="left:45.6px;top:253.8px;font-size:7.05px;color:#2b7ba0"><span style="color:#333;font-size:6.5px;letter-spacing:0.05px">DP-429</span> - DrivePilot shall contain sensors to monitor unusual vibrations from: *</div>
  <div class="t" style="left:36.0px;top:262.7px;font-size:7.05px;color:#2b7ba0">chassis *...</div>
  <div class="t" style="left:314.8px;top:253.5px;font-size:6.7px;color:#c3c3c3">No System Test Case(s)</div>
  <div class="t" style="left:314.8px;top:262.4px;font-size:6.7px;color:#c3c3c3">Found.</div>
  <div class="abs" style="left:15.0px;top:274.8px;width:395.0px;height:1px;background:#eaeaea"></div>
  <svg class="abs" style="left:17.4px;top:281.5px" width="8" height="8" viewBox="0 0 8 8"><path d="M1 1 L7 7 M7 1 L1 7" stroke="#f0434e" stroke-width="2"/></svg>
  <svg class="abs" style="left:35.8px;top:280.6px" width="10" height="9" viewBox="0 0 10 9"><g fill="#d3b3d8" stroke="#86588f" stroke-width="0.55"><circle cx="3.4" cy="2.6" r="1.7"/><circle cx="6.4" cy="2.4" r="1.7"/><circle cx="2.4" cy="5.2" r="1.7"/><circle cx="5" cy="4.6" r="1.8"/><circle cx="7.4" cy="5" r="1.6"/><circle cx="4" cy="6.8" r="1.6"/><circle cx="6.4" cy="6.9" r="1.5"/></g><path d="M5.2 5.6 L8.6 5 L8.4 8 L5.6 8.6 Z" fill="#7b2f82" opacity="0.8"/></svg>
  <div class="t" style="left:45.6px;top:284.1px;font-size:7.05px;color:#2b7ba0"><span style="color:#333;font-size:6.5px;letter-spacing:0.05px">DP-428</span> - ABS Interface Sensor shall interface with existing ABS system to detect</div>
  <div class="t" style="left:36.0px;top:293.0px;font-size:7.05px;color:#2b7ba0">braking...</div>
  <div class="t" style="left:314.8px;top:283.8px;font-size:6.7px;color:#c3c3c3">No System Test Case(s)</div>
  <div class="t" style="left:314.8px;top:292.7px;font-size:6.7px;color:#c3c3c3">Found.</div>
  <div class="abs" style="left:15.0px;top:305.1px;width:395.0px;height:1px;background:#eaeaea"></div>
  <svg class="abs" style="left:17.4px;top:311.7px" width="8" height="8" viewBox="0 0 8 8"><path d="M1 1 L7 7 M7 1 L1 7" stroke="#f0434e" stroke-width="2"/></svg>
  <svg class="abs" style="left:35.8px;top:310.8px" width="10" height="9" viewBox="0 0 10 9"><g fill="#d3b3d8" stroke="#86588f" stroke-width="0.55"><circle cx="3.4" cy="2.6" r="1.7"/><circle cx="6.4" cy="2.4" r="1.7"/><circle cx="2.4" cy="5.2" r="1.7"/><circle cx="5" cy="4.6" r="1.8"/><circle cx="7.4" cy="5" r="1.6"/><circle cx="4" cy="6.8" r="1.6"/><circle cx="6.4" cy="6.9" r="1.5"/></g><path d="M5.2 5.6 L8.6 5 L8.4 8 L5.6 8.6 Z" fill="#7b2f82" opacity="0.8"/></svg>
  <div class="t" style="left:45.6px;top:314.3px;font-size:7.05px;color:#2b7ba0"><span style="color:#333;font-size:6.5px;letter-spacing:0.05px">DP-427</span> - DrivePilot will include a road condition sensor to detect friction</div>
  <div class="t" style="left:36.0px;top:323.2px;font-size:7.05px;color:#2b7ba0">coefficients...</div>
  <div class="t" style="left:314.8px;top:314.0px;font-size:6.7px;color:#c3c3c3">No System Test Case(s)</div>
  <div class="t" style="left:314.8px;top:322.9px;font-size:6.7px;color:#c3c3c3">Found.</div>
  <div class="abs" style="left:15.0px;top:335.3px;width:395.0px;height:1px;background:#eaeaea"></div>
  <svg class="abs" style="left:17.4px;top:342.0px" width="8" height="8" viewBox="0 0 8 8"><path d="M1 1 L7 7 M7 1 L1 7" stroke="#f0434e" stroke-width="2"/></svg>
  <svg class="abs" style="left:35.8px;top:341.1px" width="10" height="9" viewBox="0 0 10 9"><g fill="#d3b3d8" stroke="#86588f" stroke-width="0.55"><circle cx="3.4" cy="2.6" r="1.7"/><circle cx="6.4" cy="2.4" r="1.7"/><circle cx="2.4" cy="5.2" r="1.7"/><circle cx="5" cy="4.6" r="1.8"/><circle cx="7.4" cy="5" r="1.6"/><circle cx="4" cy="6.8" r="1.6"/><circle cx="6.4" cy="6.9" r="1.5"/></g><path d="M5.2 5.6 L8.6 5 L8.4 8 L5.6 8.6 Z" fill="#7b2f82" opacity="0.8"/></svg>
  <div class="t" style="left:45.6px;top:344.6px;font-size:7.05px;color:#2b7ba0"><span style="color:#333;font-size:6.5px;letter-spacing:0.05px">DP-426</span> - DrivePilot shall include forward, side, and rear radar sensors for the</div>
  <div class="t" style="left:36.0px;top:353.5px;font-size:7.05px;color:#2b7ba0">detection...</div>
  <div class="t" style="left:314.8px;top:344.2px;font-size:6.7px;color:#c3c3c3">No System Test Case(s)</div>
  <div class="t" style="left:314.8px;top:353.2px;font-size:6.7px;color:#c3c3c3">Found.</div>
  <div class="abs" style="left:15.0px;top:365.6px;width:395.0px;height:1px;background:#eaeaea"></div>
  <svg class="abs" style="left:17.4px;top:372.2px" width="8" height="8" viewBox="0 0 8 8"><path d="M1 1 L7 7 M7 1 L1 7" stroke="#f0434e" stroke-width="2"/></svg>
  <svg class="abs" style="left:35.8px;top:371.3px" width="10" height="9" viewBox="0 0 10 9"><g fill="#d3b3d8" stroke="#86588f" stroke-width="0.55"><circle cx="3.4" cy="2.6" r="1.7"/><circle cx="6.4" cy="2.4" r="1.7"/><circle cx="2.4" cy="5.2" r="1.7"/><circle cx="5" cy="4.6" r="1.8"/><circle cx="7.4" cy="5" r="1.6"/><circle cx="4" cy="6.8" r="1.6"/><circle cx="6.4" cy="6.9" r="1.5"/></g><path d="M5.2 5.6 L8.6 5 L8.4 8 L5.6 8.6 Z" fill="#7b2f82" opacity="0.8"/></svg>
  <div class="t" style="left:45.6px;top:374.8px;font-size:7.05px;color:#2b7ba0"><span style="color:#333;font-size:6.5px;letter-spacing:0.05px">DP-425</span> - DrivePilot shall include forward, side, and rear infrared imaging sensors to</div>
  <div class="t" style="left:314.8px;top:374.5px;font-size:6.7px;color:#c3c3c3">No System Test Case(s)</div>
  <div class="t" style="left:314.8px;top:383.4px;font-size:6.7px;color:#c3c3c3">Found.</div>
  <div class="abs" style="left:15.0px;top:395.8px;width:395.0px;height:1px;background:#eaeaea"></div>
  <svg class="abs" style="left:416.9px;top:131.6px" width="4" height="10" viewBox="0 0 4 10"><g fill="#8c8c8c"><rect x="0.5" y="0.5" width="1" height="1"/><rect x="0.5" y="2.1" width="1" height="1"/><rect x="0.5" y="3.7" width="1" height="1"/><rect x="0.5" y="5.3" width="1" height="1"/><rect x="0.5" y="6.9" width="1" height="1"/><rect x="0.5" y="8.5" width="1" height="1"/><rect x="2.2" y="0.5" width="1" height="1"/><rect x="2.2" y="2.1" width="1" height="1"/><rect x="2.2" y="3.7" width="1" height="1"/><rect x="2.2" y="5.3" width="1" height="1"/><rect x="2.2" y="6.9" width="1" height="1"/><rect x="2.2" y="8.5" width="1" height="1"/></g></svg>
  <div class="abs" style="left:421.0px;top:128.0px;width:171.0px;height:300px;border:1px dotted #e3e3e3"></div>
  <div class="abs" style="left:422.0px;top:129.0px;width:169.0px;height:15.3px;background:#f4f4f4"></div>
  <svg class="abs" style="left:574.8px;top:132.8px" width="8.4" height="8.4" viewBox="0 0 9 9"><circle cx="4.5" cy="4.5" r="2.45" fill="none" stroke="#a4a4a4" stroke-width="1.5"/><g stroke="#a4a4a4" stroke-width="1.3"><path d="M4.5 0.4 L4.5 1.8 M4.5 7.2 L4.5 8.6 M0.4 4.5 L1.8 4.5 M7.2 4.5 L8.6 4.5 M1.6 1.6 L2.6 2.6 M6.4 6.4 L7.4 7.4 M1.6 7.4 L2.6 6.4 M6.4 2.6 L7.4 1.6"/></g></svg>
  <svg class="abs" style="left:585.6px;top:136.3px" width="4" height="3" viewBox="0 0 4 3"><path d="M0.3 0.4 L2.9 0.4 L1.6 2.1 Z" fill="#aaa"/></svg>
  <div class="abs" style="left:425.0px;top:149.0px;width:163.6px;height:16.2px;background:#e8eef3;border-radius:2.5px"></div>
  <svg class="abs" style="left:561.8px;top:153.2px" width="8" height="8" viewBox="0 0 8 8"><path d="M0.5 7.5 L0.9 5.5 L5.3 1.1 L6.9 2.7 L2.5 7.1 Z" fill="#3a85a9"/><path d="M5.9 0.5 L7.5 2.1" stroke="#3a85a9" stroke-width="0.9"/></svg>
  <svg class="abs" style="left:571.9px;top:152.8px" width="8.4" height="8.4" viewBox="0 0 9 9"><circle cx="4.5" cy="4.5" r="2.45" fill="none" stroke="#3a85a9" stroke-width="1.5"/><g stroke="#3a85a9" stroke-width="1.3"><path d="M4.5 0.4 L4.5 1.8 M4.5 7.2 L4.5 8.6 M0.4 4.5 L1.8 4.5 M7.2 4.5 L8.6 4.5 M1.6 1.6 L2.6 2.6 M6.4 6.4 L7.4 7.4 M1.6 7.4 L2.6 6.4 M6.4 2.6 L7.4 1.6"/></g></svg>
  <svg class="abs" style="left:583.0px;top:155.9px" width="4" height="3" viewBox="0 0 4 3"><path d="M0.3 0.4 L2.9 0.4 L1.6 2.1 Z" fill="#3a85a9"/></svg>
  <div class="abs" style="left:425.0px;top:166.4px;width:166.0px;height:69.2px;border:1px solid #dcdcdc;border-right:none;background:#fff;box-shadow:0 1px 2px rgba(0,0,0,0.12)"></div>
  <div class="t" style="left:434.8px;top:178.6px;font-size:6.92px;color:#333">Target Version:</div>
  <div class="t" style="left:434.8px;top:192.0px;font-size:6.92px;color:#333">Requirement Query:</div>
  <div class="t" style="left:434.8px;top:205.4px;font-size:6.92px;color:#333">Filter Linked Items By Coverage:</div>
  <div class="t" style="left:434.8px;top:218.8px;font-size:6.92px;color:#333">Collapse from number of Test Cases: <b>5</b></div>
  <div class="abs" style="left:425.0px;top:244.6px;width:160.5px;height:1.4px;background:#e6eaee"></div>
  <div class="abs" style="left:585.3px;top:240.5px;width:3px;height:10.2px;background:#e4ebf1;border-radius:1px"></div>
  <div class="abs" style="left:424.5px;top:251.0px;width:3px;height:10.4px;background:#e4ebf1;border-radius:1px"></div>
  <div class="abs" style="left:424.6px;top:266.5px;width:163.8px;height:15.7px;background:#e8eef3;border-radius:2.5px"></div>
  <svg class="abs" style="left:561.8px;top:270.4px" width="8" height="8" viewBox="0 0 8 8"><path d="M0.5 7.5 L0.9 5.5 L5.3 1.1 L6.9 2.7 L2.5 7.1 Z" fill="#3a85a9"/><path d="M5.9 0.5 L7.5 2.1" stroke="#3a85a9" stroke-width="0.9"/></svg>
  <svg class="abs" style="left:571.9px;top:270.1px" width="8.4" height="8.4" viewBox="0 0 9 9"><circle cx="4.5" cy="4.5" r="2.45" fill="none" stroke="#3a85a9" stroke-width="1.5"/><g stroke="#3a85a9" stroke-width="1.3"><path d="M4.5 0.4 L4.5 1.8 M4.5 7.2 L4.5 8.6 M0.4 4.5 L1.8 4.5 M7.2 4.5 L8.6 4.5 M1.6 1.6 L2.6 2.6 M6.4 6.4 L7.4 7.4 M1.6 7.4 L2.6 6.4 M6.4 2.6 L7.4 1.6"/></g></svg>
  <svg class="abs" style="left:583.0px;top:273.2px" width="4" height="3" viewBox="0 0 4 3"><path d="M0.3 0.4 L2.9 0.4 L1.6 2.1 Z" fill="#3a85a9"/></svg>
  <svg class="abs" style="left:422.0px;top:284.0px" width="171" height="100" viewBox="557 309 171 100"><circle cx="641.2" cy="355.8" r="22.5" fill="#c0392b"/><path d="M641.2 355.8 L641.2 333.3 A22.5 22.5 0 0 1 649.81 335.01 Z" fill="#27ae60"/><path d="M644.8 334 Q646.6 322 649 319 Q650 317.9 651.6 317.9" fill="none" stroke="#27ae60" stroke-width="0.6"/><path d="M637.6 378.2 Q636.4 388.5 634.2 392 Q633 394 631 394.2" fill="none" stroke="#c0392b" stroke-width="0.6"/></svg>
  <div class="t" style="left:520.8px;top:291.5px;font-size:5.9px;color:#333">Covered</div>
  <div class="t" style="left:465.4px;top:367.2px;font-size:5.9px;color:#333">Uncovered</div>
  <div class="abs" style="left:602.0px;top:0;width:8px;height:384px;background:#f1f1f1"></div>
  <svg class="abs" style="left:603.2px;top:2.8px" width="6" height="4" viewBox="0 0 6 4"><path d="M0.6 3.2 L3 0.6 L5.4 3.2 Z" fill="#a3a3a3"/></svg>
  <div class="abs" style="left:603.4px;top:9.0px;width:6.4px;height:129.2px;background:#c1c1c1"></div>
  <div class="abs" style="left:609.8px;top:0;width:3.2px;height:384px;background:#f4f4f4"></div>
</div>

<!-- ================= RIGHT PANEL ================= -->
<div id="right" class="abs" style="left:748px;top:25px;width:275px;height:384px;background:#fff;overflow:hidden">
  <div class="abs" style="left:0;top:0;width:275px;height:22px;background:#005f87"></div>
  <svg class="abs" style="left:6.6px;top:8.7px" width="13" height="6.4" viewBox="0 0 14 7"><g fill="none" stroke="#fff" stroke-width="1.5"><path d="M4.4 0.8 L1.2 3.5 L4.4 6.2"/><path d="M9.6 0.8 L12.8 3.5 L9.6 6.2"/><path d="M8 0.4 L6 6.6" stroke-width="1.2"/></g></svg>
  <div class="t" style="left:24.6px;top:8.6px;font-size:9.3px;font-weight:bold;color:#fff;letter-spacing:-0.05px">Page Script</div>
  <svg class="abs" style="left:259.2px;top:4.7px" width="11" height="11" viewBox="0 0 11 11"><circle cx="5.5" cy="5.5" r="4.3" fill="none" stroke="#fff" stroke-width="1"/><path d="M3.8 3.8 L7.2 7.2 M7.2 3.8 L3.8 7.2" stroke="#fff" stroke-width="1.2"/></svg>
  <svg class="abs" style="left:3.7px;top:25.3px" width="9" height="6" viewBox="0 0 9 6"><path d="M0.4 3 Q4.5 -1.6 8.6 3 Q4.5 7.6 0.4 3 Z" fill="none" stroke="#3c3c3c" stroke-width="1.1"/><circle cx="4.5" cy="3" r="1.8" fill="#3c3c3c"/></svg>
  <div class="t" style="left:15.7px;top:24.6px;font-size:7px;color:#444;letter-spacing:-0.27px">Show Results</div>
  <div class="abs" style="left:3.0px;top:36.0px;width:15.6px;height:360px;background:#f7f7f7;border-right:1px solid #e2e2e2"></div>
  <div class="abs" style="left:18.6px;top:38.2px;width:254.1px;height:8.8px;background:#e8f2ff"></div>
  <div class="abs" style="left:18.8px;top:0;width:253.9px;height:384px;overflow:hidden">
  <div class="t" style="left:2.2px;top:40.80px;font-size:6.77px"><span style="color:#aa5500">##########################################################################################</span></div>
  <div class="t" style="left:2.2px;top:49.86px;font-size:6.77px"><span style="color:#aa5500">##</span></div>
  <div class="t" style="left:2.2px;top:58.92px;font-size:6.77px"><span style="color:#aa5500">## Page Script</span></div>
  <div class="t" style="left:2.2px;top:67.97px;font-size:6.77px"><span style="color:#aa5500">##</span></div>
  <div class="t" style="left:2.2px;top:77.03px;font-size:6.77px"><span style="color:#aa5500">## com.polarion.alm.shared.api.transaction.ReadOnlyTransaction $transaction</span></div>
  <div class="t" style="left:2.2px;top:86.09px;font-size:6.77px"><span style="color:#aa5500">## com.polarion.alm.shared.api.model.rp.RichPage $page</span></div>
  <div class="t" style="left:2.2px;top:95.15px;font-size:6.77px"><span style="color:#aa5500">##</span></div>
  <div class="t" style="left:2.2px;top:113.26px;font-size:6.77px"><span style="color:#770088">#set</span><span style="color:#222">(</span><span style="color:#3328ad">$query</span><span style="color:#222"> = </span><span style="color:#aa1111">"project.id:(</span><span style="color:#3328ad">$page.getReference().projectId()</span><span style="color:#aa1111">) AND type:systemrequirement"</span><span style="color:#222">)</span></div>
  <div class="t" style="left:2.2px;top:122.32px;font-size:6.77px"><span style="color:#770088">#if</span><span style="color:#222">(!</span><span style="color:#3328ad">$pageParameters.query.value().isEmpty()</span><span style="color:#222">)</span></div>
  <div class="t" style="left:9.9px;top:131.38px;font-size:6.77px"><span style="color:#770088">#set</span><span style="color:#222">(</span><span style="color:#3328ad">$query</span><span style="color:#222"> = </span><span style="color:#aa1111">"$query AND </span><span style="color:#3328ad">$pageParameters.query.value()</span><span style="color:#aa1111">"</span><span style="color:#222">)</span></div>
  <div class="t" style="left:2.2px;top:140.44px;font-size:6.77px"><span style="color:#770088">#end</span></div>
  <div class="t" style="left:2.2px;top:149.50px;font-size:6.77px"><span style="color:#770088">#if</span><span style="color:#222">(</span><span style="color:#3328ad">$pageParameters.targetVersion.singleValue()</span><span style="color:#222">)</span></div>
  <div class="t" style="left:9.9px;top:158.55px;font-size:6.77px"><span style="color:#770088">#set</span><span style="color:#222">(</span><span style="color:#3328ad">$query</span><span style="color:#222"> = </span><span style="color:#aa1111">"$query AND targetVersion.KEY:(</span><span style="color:#3328ad">$pageParameters.targetVersion.singleValue()</span><span style="color:#aa1111">)"</span><span style="color:#222">)</span></div>
  <div class="t" style="left:2.2px;top:167.61px;font-size:6.77px"><span style="color:#770088">#end</span></div>
  <div class="t" style="left:2.2px;top:176.67px;font-size:6.77px"><span style="color:#770088">#set</span><span style="color:#222">(</span><span style="color:#3328ad">$requirements</span><span style="color:#222"> = </span><span style="color:#3328ad">$transaction.workItems().search().query(</span><span style="color:#222">"$query"))</span></div>
  <div class="t" style="left:2.2px;top:185.73px;font-size:6.77px"><span style="color:#770088">#set</span><span style="color:#222">(</span><span style="color:#3328ad">$uncoveredIds</span><span style="color:#222"> = </span><span style="color:#aa1111">""</span><span style="color:#222">)</span></div>
  <div class="t" style="left:2.2px;top:194.79px;font-size:6.77px"><span style="color:#770088">#set</span><span style="color:#222">(</span><span style="color:#3328ad">$coveredIds</span><span style="color:#222"> = </span><span style="color:#aa1111">""</span><span style="color:#222">)</span></div>
  <div class="t" style="left:2.2px;top:203.84px;font-size:6.77px"><span style="color:#770088">#foreach</span><span style="color:#222">(</span><span style="color:#3328ad">$requirement</span><span style="color:#222"> in </span><span style="color:#3328ad">$requirements</span><span style="color:#222">)</span></div>
  <div class="t" style="left:9.9px;top:212.90px;font-size:6.77px"><span style="color:#770088">#set</span><span style="color:#222">(</span><span style="color:#3328ad">$isCovered</span><span style="color:#222"> = </span><span style="color:#222">false</span><span style="color:#222">)</span></div>
  <div class="t" style="left:9.9px;top:221.96px;font-size:6.77px"><span style="color:#770088">#foreach</span><span style="color:#222">(</span><span style="color:#3328ad">$linkedWi</span><span style="color:#222"> in </span><span style="color:#3328ad">$requirement.fields().linkedWorkItems().back()</span><span style="color:#222">)</span></div>
  <div class="t" style="left:17.5px;top:231.02px;font-size:6.77px"><span style="color:#770088">#if</span><span style="color:#222">(</span><span style="color:#3328ad">$linkedWi.fields().role().optionId().equals(</span><span style="color:#222">"verifies"))</span></div>
  <div class="t" style="left:25.2px;top:240.08px;font-size:6.77px"><span style="color:#770088">#if</span><span style="color:#222">(</span><span style="color:#3328ad">$linkedWi.fields().workItem().get().fields().type().get().id().equals(</span><span style="color:#222">"systemtestcase"))</span></div>
  <div class="t" style="left:32.8px;top:249.13px;font-size:6.77px"><span style="color:#770088">#set</span><span style="color:#222">(</span><span style="color:#3328ad">$isCovered</span><span style="color:#222"> = </span><span style="color:#222">true</span><span style="color:#222">)</span></div>
  <div class="t" style="left:25.2px;top:258.19px;font-size:6.77px"><span style="color:#770088">#end</span></div>
  <div class="t" style="left:17.5px;top:267.25px;font-size:6.77px"><span style="color:#770088">#end</span></div>
  <div class="t" style="left:9.9px;top:276.31px;font-size:6.77px"><span style="color:#770088">#end</span></div>
  <div class="t" style="left:9.9px;top:285.37px;font-size:6.77px"><span style="color:#770088">#if</span><span style="color:#222">(</span><span style="color:#3328ad">$isCovered</span><span style="color:#222">)</span></div>
  <div class="t" style="left:17.5px;top:294.42px;font-size:6.77px"><span style="color:#770088">#set</span><span style="color:#222">(</span><span style="color:#3328ad">$coveredIds</span><span style="color:#222"> = </span><span style="color:#aa1111">"$!coveredIds </span><span style="color:#3328ad">$requirement.getReference().id()</span><span style="color:#aa1111">"</span><span style="color:#222">)</span></div>
  <div class="t" style="left:9.9px;top:303.48px;font-size:6.77px"><span style="color:#770088">#else</span></div>
  <div class="t" style="left:17.5px;top:312.54px;font-size:6.77px"><span style="color:#770088">#set</span><span style="color:#222">(</span><span style="color:#3328ad">$uncoveredIds</span><span style="color:#222"> = </span><span style="color:#aa1111">"$!uncoveredIds </span><span style="color:#3328ad">$requirement.getReference().id()</span><span style="color:#aa1111">"</span><span style="color:#222">)</span></div>
  <div class="t" style="left:9.9px;top:321.60px;font-size:6.77px"><span style="color:#770088">#end</span></div>
  <div class="t" style="left:2.2px;top:330.66px;font-size:6.77px"><span style="color:#770088">#end</span></div>
  <div class="t" style="left:2.2px;top:348.77px;font-size:6.77px"><span style="color:#3328ad">$</span><span style="color:#222">!pageContext.put("coveredIds", </span><span style="color:#3328ad">$coveredIds</span><span style="color:#222">)</span></div>
  <div class="t" style="left:2.2px;top:357.83px;font-size:6.77px"><span style="color:#3328ad">$</span><span style="color:#222">!pageContext.put("uncoveredIds", </span><span style="color:#3328ad">$uncoveredIds</span><span style="color:#222">)</span></div>
  <div class="t" style="left:2.2px;top:375.95px;font-size:6.77px"><span style="color:#222">Covered IDs: </span><span style="color:#3328ad">$coveredIds</span><span style="color:#222"> &lt;br/&gt;</span></div>
  <div class="t" style="left:2.2px;top:385.00px;font-size:6.77px"><span style="color:#222">Uncovered IDs: </span><span style="color:#3328ad">$uncoveredIds</span><span style="color:#222"> &lt;br/&gt;</span></div>
  </div>
  <div class="t" style="left:3.0px;width:13.6px;text-align:right;top:40.90px;font-size:6.6px;color:#9a9a9a">1</div>
  <div class="t" style="left:3.0px;width:13.6px;text-align:right;top:49.96px;font-size:6.6px;color:#9a9a9a">2</div>
  <div class="t" style="left:3.0px;width:13.6px;text-align:right;top:59.02px;font-size:6.6px;color:#9a9a9a">3</div>
  <div class="t" style="left:3.0px;width:13.6px;text-align:right;top:68.07px;font-size:6.6px;color:#9a9a9a">4</div>
  <div class="t" style="left:3.0px;width:13.6px;text-align:right;top:77.13px;font-size:6.6px;color:#9a9a9a">5</div>
  <div class="t" style="left:3.0px;width:13.6px;text-align:right;top:86.19px;font-size:6.6px;color:#9a9a9a">6</div>
  <div class="t" style="left:3.0px;width:13.6px;text-align:right;top:95.25px;font-size:6.6px;color:#9a9a9a">7</div>
  <div class="t" style="left:3.0px;width:13.6px;text-align:right;top:104.31px;font-size:6.6px;color:#9a9a9a">8</div>
  <div class="t" style="left:3.0px;width:13.6px;text-align:right;top:113.36px;font-size:6.6px;color:#9a9a9a">9</div>
  <div class="t" style="left:3.0px;width:13.6px;text-align:right;top:122.42px;font-size:6.6px;color:#9a9a9a">10</div>
  <div class="t" style="left:3.0px;width:13.6px;text-align:right;top:131.48px;font-size:6.6px;color:#9a9a9a">11</div>
  <div class="t" style="left:3.0px;width:13.6px;text-align:right;top:140.54px;font-size:6.6px;color:#9a9a9a">12</div>
  <div class="t" style="left:3.0px;width:13.6px;text-align:right;top:149.60px;font-size:6.6px;color:#9a9a9a">13</div>
  <div class="t" style="left:3.0px;width:13.6px;text-align:right;top:158.65px;font-size:6.6px;color:#9a9a9a">14</div>
  <div class="t" style="left:3.0px;width:13.6px;text-align:right;top:167.71px;font-size:6.6px;color:#9a9a9a">15</div>
  <div class="t" style="left:3.0px;width:13.6px;text-align:right;top:176.77px;font-size:6.6px;color:#9a9a9a">16</div>
  <div class="t" style="left:3.0px;width:13.6px;text-align:right;top:185.83px;font-size:6.6px;color:#9a9a9a">17</div>
  <div class="t" style="left:3.0px;width:13.6px;text-align:right;top:194.89px;font-size:6.6px;color:#9a9a9a">18</div>
  <div class="t" style="left:3.0px;width:13.6px;text-align:right;top:203.94px;font-size:6.6px;color:#9a9a9a">19</div>
  <div class="t" style="left:3.0px;width:13.6px;text-align:right;top:213.00px;font-size:6.6px;color:#9a9a9a">20</div>
  <div class="t" style="left:3.0px;width:13.6px;text-align:right;top:222.06px;font-size:6.6px;color:#9a9a9a">21</div>
  <div class="t" style="left:3.0px;width:13.6px;text-align:right;top:231.12px;font-size:6.6px;color:#9a9a9a">22</div>
  <div class="t" style="left:3.0px;width:13.6px;text-align:right;top:240.18px;font-size:6.6px;color:#9a9a9a">23</div>
  <div class="t" style="left:3.0px;width:13.6px;text-align:right;top:249.23px;font-size:6.6px;color:#9a9a9a">24</div>
  <div class="t" style="left:3.0px;width:13.6px;text-align:right;top:258.29px;font-size:6.6px;color:#9a9a9a">25</div>
  <div class="t" style="left:3.0px;width:13.6px;text-align:right;top:267.35px;font-size:6.6px;color:#9a9a9a">26</div>
  <div class="t" style="left:3.0px;width:13.6px;text-align:right;top:276.41px;font-size:6.6px;color:#9a9a9a">27</div>
  <div class="t" style="left:3.0px;width:13.6px;text-align:right;top:285.47px;font-size:6.6px;color:#9a9a9a">28</div>
  <div class="t" style="left:3.0px;width:13.6px;text-align:right;top:294.52px;font-size:6.6px;color:#9a9a9a">29</div>
  <div class="t" style="left:3.0px;width:13.6px;text-align:right;top:303.58px;font-size:6.6px;color:#9a9a9a">30</div>
  <div class="t" style="left:3.0px;width:13.6px;text-align:right;top:312.64px;font-size:6.6px;color:#9a9a9a">31</div>
  <div class="t" style="left:3.0px;width:13.6px;text-align:right;top:321.70px;font-size:6.6px;color:#9a9a9a">32</div>
  <div class="t" style="left:3.0px;width:13.6px;text-align:right;top:330.76px;font-size:6.6px;color:#9a9a9a">33</div>
  <div class="t" style="left:3.0px;width:13.6px;text-align:right;top:339.81px;font-size:6.6px;color:#9a9a9a">34</div>
  <div class="t" style="left:3.0px;width:13.6px;text-align:right;top:348.87px;font-size:6.6px;color:#9a9a9a">35</div>
  <div class="t" style="left:3.0px;width:13.6px;text-align:right;top:357.93px;font-size:6.6px;color:#9a9a9a">36</div>
  <div class="t" style="left:3.0px;width:13.6px;text-align:right;top:366.99px;font-size:6.6px;color:#9a9a9a">37</div>
  <div class="t" style="left:3.0px;width:13.6px;text-align:right;top:376.05px;font-size:6.6px;color:#9a9a9a">38</div>
  <div class="t" style="left:3.0px;width:13.6px;text-align:right;top:385.10px;font-size:6.6px;color:#9a9a9a">39</div>
</div>
</body>
</html>
